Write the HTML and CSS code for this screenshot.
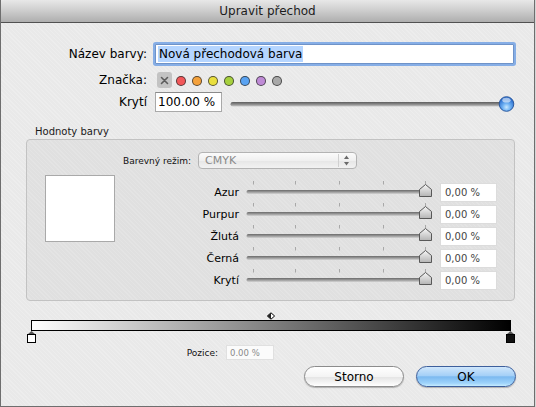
FILE: index.html
```html
<!DOCTYPE html>
<html lang="cs">
<head>
<meta charset="utf-8">
<title>Upravit přechod</title>
<link rel="stylesheet" href="styles.css">
</head>
<body>
<div class="window">
  <div class="titlebar">Upravit přechod</div>

  <div class="form">
    <div class="label row1">Název barvy:</div>
    <div class="row1 ctl">
      <div class="namefield"><span class="sel">Nová přechodová barva</span></div>
    </div>

    <div class="label row2">Značka:</div>
    <div class="row2 ctl tags">
      <svg class="nolabel" width="15" height="16" viewBox="0 0 15 16">
        <rect x="0" y="0" width="15" height="16" rx="3" fill="#c3c3c3"/>
        <path d="M4.5 5.5 L10.5 11.5 M10.5 5.5 L4.5 11.5" stroke="#5c5c5c" stroke-width="1.6" stroke-linecap="round"/>
      </svg>
      <span class="dot red"></span>
      <span class="dot orange"></span>
      <span class="dot yellow"></span>
      <span class="dot green"></span>
      <span class="dot blue"></span>
      <span class="dot purple"></span>
      <span class="dot gray"></span>
    </div>

    <div class="label row3">Krytí</div>
    <div class="row3 ctl opacity">
      <div class="field opfield">100.00 %</div>
      <svg class="opslider" width="285" height="20" viewBox="0 0 285 20">
        <defs>
          <linearGradient id="trk" x1="0" y1="0" x2="0" y2="1">
            <stop offset="0" stop-color="#5e5e5e"/>
            <stop offset="0.5" stop-color="#8a8a8a"/>
            <stop offset="1" stop-color="#c9c9c9"/>
          </linearGradient>
          <radialGradient id="blue" cx="0.5" cy="0.72" r="0.6">
            <stop offset="0" stop-color="#c8e8ff"/>
            <stop offset="0.45" stop-color="#6eb0f2"/>
            <stop offset="1" stop-color="#2c6fcf"/>
          </radialGradient>
        </defs>
        <rect x="0.5" y="10" width="276" height="4.5" rx="2.25" fill="url(#trk)"/>
        <circle cx="276.5" cy="12" r="7.3" fill="url(#blue)" stroke="#2d5a9e" stroke-width="1"/>
        <ellipse cx="276.5" cy="8.2" rx="4.2" ry="2.4" fill="#ffffff" opacity="0.55"/>
      </svg>
    </div>
  </div>

  <div class="grouplabel">Hodnoty barvy</div>
  <div class="group">
    <div class="moderow">
      <div class="smalllabel modelabel">Barevný režim:</div>
      <div class="popup">
        <span class="popuptext">CMYK</span>
        <svg class="stepper" width="16" height="15" viewBox="0 0 16 15">
          <line x1="0.5" y1="1" x2="0.5" y2="14" stroke="#d0d0d0"/>
          <path d="M6 6 L8.5 2.5 L11 6 Z" fill="#6a6a6a"/>
          <path d="M6 9 L8.5 12.5 L11 9 Z" fill="#6a6a6a"/>
        </svg>
      </div>
    </div>
    <div class="bodyrow">
      <div class="swatch"></div>
      <div class="sliders">
        <div class="srow">
          <div class="slabel">Azur</div>
          <svg class="cslider" width="186" height="22" viewBox="0 0 186 22">
            <use href="#sl"/>
          </svg>
          <div class="vfield">0,00 %</div>
        </div>
        <div class="srow">
          <div class="slabel">Purpur</div>
          <svg class="cslider" width="186" height="22" viewBox="0 0 186 22">
            <use href="#sl"/>
          </svg>
          <div class="vfield">0,00 %</div>
        </div>
        <div class="srow">
          <div class="slabel">Žlutá</div>
          <svg class="cslider" width="186" height="22" viewBox="0 0 186 22">
            <use href="#sl"/>
          </svg>
          <div class="vfield">0,00 %</div>
        </div>
        <div class="srow">
          <div class="slabel">Černá</div>
          <svg class="cslider" width="186" height="22" viewBox="0 0 186 22">
            <use href="#sl"/>
          </svg>
          <div class="vfield">0,00 %</div>
        </div>
        <div class="srow">
          <div class="slabel">Krytí</div>
          <svg class="cslider" width="186" height="22" viewBox="0 0 186 22">
            <use href="#sl"/>
          </svg>
          <div class="vfield">0,00 %</div>
        </div>
      </div>
    </div>
  </div>

  <svg class="gradeditor" width="490" height="31" viewBox="0 0 490 31">
    <defs>
      <linearGradient id="bw" x1="0" y1="0" x2="1" y2="0">
        <stop offset="0" stop-color="#ffffff"/>
        <stop offset="1" stop-color="#000000"/>
      </linearGradient>
    </defs>
    <rect x="5.5" y="8.5" width="479" height="10" fill="url(#bw)" stroke="#000"/>
    <path d="M245 0.8 L248.6 4 L245 7.2 L241.4 4 Z" fill="#fff" stroke="#000" stroke-width="1"/>
    <path d="M245 0.8 L241.4 4 L245 7.2 Z" fill="#222"/>
    <path d="M5.5 19 L9.5 22.5 L1.5 22.5 Z" fill="#555"/>
    <rect x="1.5" y="22.5" width="8" height="8" fill="#fff" stroke="#000"/>
    <path d="M484.5 19 L488.5 22.5 L480.5 22.5 Z" fill="#555"/>
    <rect x="480.5" y="22.5" width="8" height="8" fill="#111" stroke="#000"/>
  </svg>

  <div class="posrow">
    <div class="smalllabel poslabel">Pozice:</div>
    <div class="posfield">0.00 %</div>
  </div>

  <div class="buttons">
    <div class="btn cancel">Storno</div>
    <div class="btn ok">OK</div>
  </div>
</div>

<svg width="0" height="0" class="defs">
  <defs>
    <linearGradient id="trk2" x1="0" y1="0" x2="0" y2="1">
      <stop offset="0" stop-color="#6a6a6a"/>
      <stop offset="0.5" stop-color="#9a9a9a"/>
      <stop offset="1" stop-color="#d4d4d4"/>
    </linearGradient>
    <linearGradient id="knob" x1="0" y1="0" x2="0" y2="1">
      <stop offset="0" stop-color="#f6f6f6"/>
      <stop offset="1" stop-color="#b4b4b4"/>
    </linearGradient>
    <g id="sl">
      <g stroke="#a8a8a8" stroke-width="1">
        <line x1="7.5" y1="0" x2="7.5" y2="3.5"/>
        <line x1="49.5" y1="0" x2="49.5" y2="3.5"/>
        <line x1="93.5" y1="0" x2="93.5" y2="3.5"/>
        <line x1="137.5" y1="0" x2="137.5" y2="3.5"/>
        <line x1="179.5" y1="0" x2="179.5" y2="3.5"/>
      </g>
      <rect x="0.5" y="9" width="180" height="4" rx="2" fill="url(#trk2)"/>
      <path d="M173.5 15.5 L173.5 8.5 L179.5 3.5 L185.5 8.5 L185.5 15.5 Z" fill="url(#knob)" stroke="#585858" stroke-width="1" stroke-linejoin="round"/>
    </g>
  </defs>
</svg>
</body>
</html>
```

FILE: styles.css
```css
html, body {
  margin: 0;
  padding: 0;
  background: #d6d6d6;
}

body {
  font-family: "DejaVu Sans", "Noto Sans", sans-serif;
  color: #000;
}

.defs {
  position: absolute;
  width: 0;
  height: 0;
}

.window {
  width: 535px;
  height: 407px;
  box-sizing: border-box;
  border-left: 1px solid #6e6e6e;
  border-right: 1px solid #6e6e6e;
  border-bottom: 1px solid #6e6e6e;
  background-color: #e9e9e9;
  background-image: repeating-linear-gradient(45deg, rgba(255,255,255,0.18) 0 1px, transparent 1px 3px);
  display: flex;
  flex-direction: column;
}

.titlebar {
  height: 22px;
  border-bottom: 1px solid #515151;
  background: linear-gradient(#e8e8e8, #cfcfcf 45%, #aeaeae);
  text-align: center;
  font-size: 12px;
  line-height: 22px;
  color: #1c1c1c;
  border-radius: 4px 4px 0 0;
}

.form {
  display: grid;
  grid-template-columns: 146px 1fr;
  column-gap: 8px;
}

.label {
  font-size: 12px;
  text-align: right;
  display: flex;
  align-items: center;
  justify-content: flex-end;
}

.row1 { margin-top: 21px; height: 20px; }
.row2 { margin-top: 8px; height: 16px; }
.row3 { margin-top: 4px; height: 20px; }

.ctl {
  display: flex;
  align-items: center;
}

.namefield {
  width: 359px;
  height: 20px;
  box-sizing: border-box;
  background: #fff;
  border: 1px solid #6f93c8;
  box-shadow: 0 0 0 2px #86aee6;
  border-radius: 1px;
  display: flex;
  align-items: center;
  padding-left: 2px;
  font-size: 12px;
}

.sel {
  background: #b5d5ff;
  line-height: 16px;
  padding: 0 1px;
}

.tags {
  gap: 6px;
}

.nolabel {
  margin-left: 2px;
  margin-right: -2px;
}

.dot {
  width: 10px;
  height: 10px;
  box-sizing: border-box;
  border-radius: 50%;
  border: 1px solid rgba(40, 40, 40, 0.75);
  margin-top: 1px;
}
.dot.red { background: #f2585a; }
.dot.orange { background: #f4a13b; }
.dot.yellow { background: #e9df3e; }
.dot.green { background: #a6d03e; }
.dot.blue { background: #5aa3f2; }
.dot.purple { background: #bf8bd6; }
.dot.gray { background: #a9a9a9; }

.opacity {
  gap: 8px;
}

.field {
  background: #fff;
  box-sizing: border-box;
  border: 1px solid #a9a9a9;
  border-top-color: #8a8a8a;
  font-size: 12px;
  display: flex;
  align-items: center;
  padding-left: 2px;
}

.opfield {
  width: 67px;
  height: 20px;
}

.grouplabel {
  margin-top: 14px;
  margin-left: 34px;
  font-size: 10px;
  line-height: 12px;
  color: #1a1a1a;
}

.group {
  margin-top: 1px;
  margin-left: 25px;
  width: 489px;
  height: 162px;
  box-sizing: border-box;
  border: 1px solid #c2c2c2;
  border-radius: 4px;
  background: rgba(0, 0, 0, 0.035);
  padding-top: 12px;
}

.moderow {
  display: flex;
  align-items: center;
  height: 17px;
  gap: 7px;
}

.smalllabel {
  font-size: 9px;
  color: #111;
}

.modelabel {
  width: 164px;
  text-align: right;
}

.popup {
  width: 159px;
  height: 17px;
  box-sizing: border-box;
  border: 1px solid #b3b3b3;
  border-radius: 4px;
  background: linear-gradient(#fbfbfb, #f0f0f0 50%, #e6e6e6 51%, #f2f2f2);
  display: flex;
  align-items: center;
  justify-content: space-between;
}

.popuptext {
  padding-left: 6px;
  font-size: 11px;
  color: #8a8a8a;
}

.stepper {
  margin-right: 2px;
}

.bodyrow {
  display: flex;
  margin-top: 6px;
}

.swatch {
  margin-left: 18px;
  width: 70px;
  height: 67px;
  box-sizing: border-box;
  background: #fff;
  border: 1px solid #a9a9a9;
}

.sliders {
  margin-top: 6px;
  display: flex;
  flex-direction: column;
}

.srow {
  display: flex;
  align-items: center;
  height: 22px;
}

.slabel {
  width: 124px;
  text-align: right;
  font-size: 11px;
  margin-right: 7px;
}

.cslider {
  display: block;
  margin-right: 8px;
}

.vfield {
  width: 57px;
  height: 19px;
  box-sizing: border-box;
  background: #fff;
  border: 1px solid #dcdcdc;
  font-size: 10px;
  color: #444;
  display: flex;
  align-items: center;
  padding-left: 4px;
}

.gradeditor {
  display: block;
  margin-top: 11px;
  margin-left: 25px;
}

.posrow {
  display: flex;
  align-items: center;
  margin-top: 2px;
  padding-left: 177px;
  gap: 8px;
}

.poslabel {
  width: 40px;
  text-align: right;
}

.posfield {
  width: 48px;
  height: 15px;
  box-sizing: border-box;
  background: #fbfbfb;
  border: 1px solid #e0e0e0;
  font-size: 8.5px;
  color: #8a8a8a;
  display: flex;
  align-items: center;
  padding-left: 3px;
}

.buttons {
  display: flex;
  justify-content: flex-end;
  gap: 12px;
  margin-top: 6px;
  padding-right: 18px;
}

.btn {
  width: 100px;
  height: 21px;
  box-sizing: border-box;
  border-radius: 11px;
  font-size: 12px;
  display: flex;
  align-items: center;
  justify-content: center;
  box-shadow: 0 1px 1px rgba(0, 0, 0, 0.25);
}

.cancel {
  border: 1px solid #8c8c8c;
  background: linear-gradient(#ffffff, #f4f4f4 50%, #e4e4e4 52%, #f6f6f6 85%, #ffffff);
}

.ok {
  border: 1px solid #3d5f9c;
  background: linear-gradient(#cfe6fb, #a5d0f7 45%, #7cb9f0 52%, #9ed3fb 85%, #c6ecff);
}
```
